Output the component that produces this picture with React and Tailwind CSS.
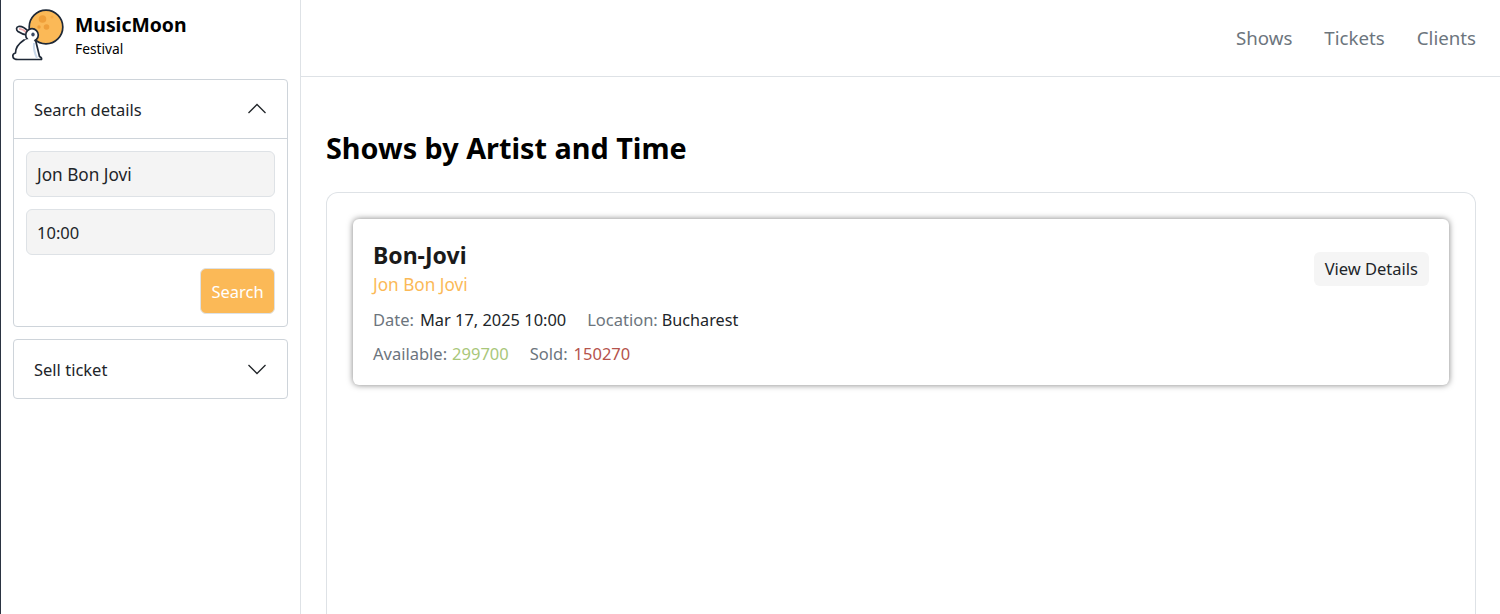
function Rabbit() {
  return (
    <svg width="56" height="54" viewBox="10 8 56 54" className="absolute left-[9px] top-[8px]">
      <circle cx="46" cy="27" r="16.800" fill="#fbb957" stroke="#1f2937" strokeWidth="1.700" />
      <circle cx="42.500" cy="19" r="3.800" fill="#ef9f3a" />
      <circle cx="46.500" cy="27" r="2.800" fill="#ef9f3a" />
      <circle cx="39" cy="27" r="1.700" fill="#ef9f3a" />
      <circle cx="52" cy="17" r="1.600" fill="#f7ac49" />
      <path d="M28 31 C25 28 21 26 18.500 26.500 C16 27 16 30 18 31.500 C21 33.500 24 34.500 27 35 Z" fill="#fff" stroke="#1f2937" strokeWidth="1.700" strokeLinejoin="round" />
      <path d="M19 28.800 C22 28.800 24.500 30.500 26.500 32.500" fill="none" stroke="#f3aeb0" strokeWidth="1.800" />
      <path d="M24 40 C18 44 15.500 49 15.500 53 C13.500 53.500 12.500 55 13 57 C13.500 59 16 59.500 18 59.500 L41.500 59.500 C42 58 40.500 57 39.500 56.500 C38.500 52 37 46 35.500 40 Z" fill="#fff" stroke="#1f2937" strokeWidth="1.700" strokeLinejoin="round" />
      <circle cx="32" cy="35" r="6.300" fill="#fff" stroke="#1f2937" strokeWidth="1.700" />
      <ellipse cx="29.500" cy="41.500" rx="5" ry="2.500" fill="#fff" />
      <ellipse cx="33" cy="34.500" rx="1.700" ry="2.100" fill="#3b4a63" />
      <path d="M34 43 C33.500 48 34.500 53 37 58" fill="none" stroke="#c9d8ea" strokeWidth="2" />
    </svg>
  );
}
function Up() {
  return (
    <svg width="20" height="20" viewBox="0 0 20 20" fill="none" stroke="#212529" strokeWidth="1.300"><path d="M1.500 14 L10 5.500 L18.500 14" /></svg>
  );
}
function Down() {
  return (
    <svg width="20" height="20" viewBox="0 0 20 20" fill="none" stroke="#212529" strokeWidth="1.300"><path d="M1.500 6 L10 14.500 L18.500 6" /></svg>
  );
}
export default function App() {
  return (
    <div className="flex h-[614px] overflow-hidden bg-white text-[16.500px] text-[#212529]" style={{ fontFamily: '"Noto Sans", "Open Sans", sans-serif' }}>
      <div className="w-[1px] shrink-0 bg-[#2b3442]" />
      <aside className="relative w-[300px] shrink-0 border-r border-[#dee2e6] px-3">
        <Rabbit />
        <div className="h-[79px] pl-[62px] pt-[12px]">
          <div className="text-[19.400px] font-bold leading-[25px] text-black">MusicMoon</div>
          <div className="text-[13.800px] leading-[24px] text-black">Festival</div>
        </div>
        <div className="rounded-[4px] border border-[#ced4da]">
          <div className="flex h-[59px] items-center justify-between border-b border-[#ced4da] pl-5 pr-5">
            <span className="pt-[2px]">Search details</span><Up />
          </div>
          <div className="flex flex-col p-3">
            <div className="flex h-[46px] items-center rounded-[6px] border border-[#dee2e6] bg-[#f4f4f4] pl-[10px] pt-[2px] text-[17.200px]">Jon Bon Jovi</div>
            <div className="mt-3 flex h-[46px] items-center rounded-[6px] border border-[#dee2e6] bg-[#f4f4f4] pl-[10px] pt-[2px]">10:00</div>
            <div className="mt-[13px] self-end flex h-[46px] w-[75px] items-center justify-center rounded-[6px] border border-[#dee2e6] bg-[#fbb957] pt-[2px] text-white">Search</div>
          </div>
        </div>
        <div className="mt-3 flex h-[60px] items-center justify-between rounded-[4px] border border-[#ced4da] pl-5 pr-5">
          <span className="pt-[2px]">Sell ticket</span><Down />
        </div>
      </aside>
      <main className="flex min-w-0 flex-1 flex-col">
        <nav className="flex h-[77px] shrink-0 items-center justify-end gap-8 border-b border-[#dee2e6] pr-6 text-[18.700px] text-[#6c757d]">
          <span>Shows</span><span>Tickets</span><span>Clients</span>
        </nav>
        <div className="flex flex-1 flex-col pl-[25px] pr-6">
          <h1 className="mt-[53px] text-[28.800px] font-bold leading-[36px] text-black">Shows by Artist and Time</h1>
          <div className="mt-[26px] flex-1 rounded-t-[12px] border border-b-0 border-[#dee2e6] px-[26px] pt-[26px]">
            <div className="flex h-[166px] items-start justify-between rounded-[6px] bg-white pl-[20px] pr-[20px] pt-[20px] shadow-[0_0_6px_rgba(0,0,0,0.5)]">
              <div>
                <div className="text-[23px] font-bold leading-[32px] text-[#1a1a1a]">Bon-Jovi</div>
                <div className="pt-[1px] text-[17.200px] leading-[26px] text-[#fbb957]">Jon Bon Jovi</div>
                <div className="mt-[10px] flex leading-[24px]">
                  <span className="text-[#6c757d]">Date:</span>
                  <span className="ml-[6px] text-[16.400px]">Mar 17, 2025 10:00</span>
                  <span className="ml-[21px] text-[#6c757d]">Location:</span>
                  <span className="ml-[4px] text-[16.200px]">Bucharest</span>
                </div>
                <div className="mt-[10px] flex leading-[24px]">
                  <span className="text-[#6c757d]">Available:</span>
                  <span className="ml-[5px] text-[#a9c77a]">299700</span>
                  <span className="ml-[21px] text-[#6c757d]">Sold:</span>
                  <span className="ml-[6px] text-[#b5534c]">150270</span>
                </div>
              </div>
              <div className="mt-[13px] flex h-[34px] items-center rounded-[6px] bg-[#f5f5f5] px-[11px] pt-[1px]">View Details</div>
            </div>
          </div>
        </div>
      </main>
    </div>
  );
}
